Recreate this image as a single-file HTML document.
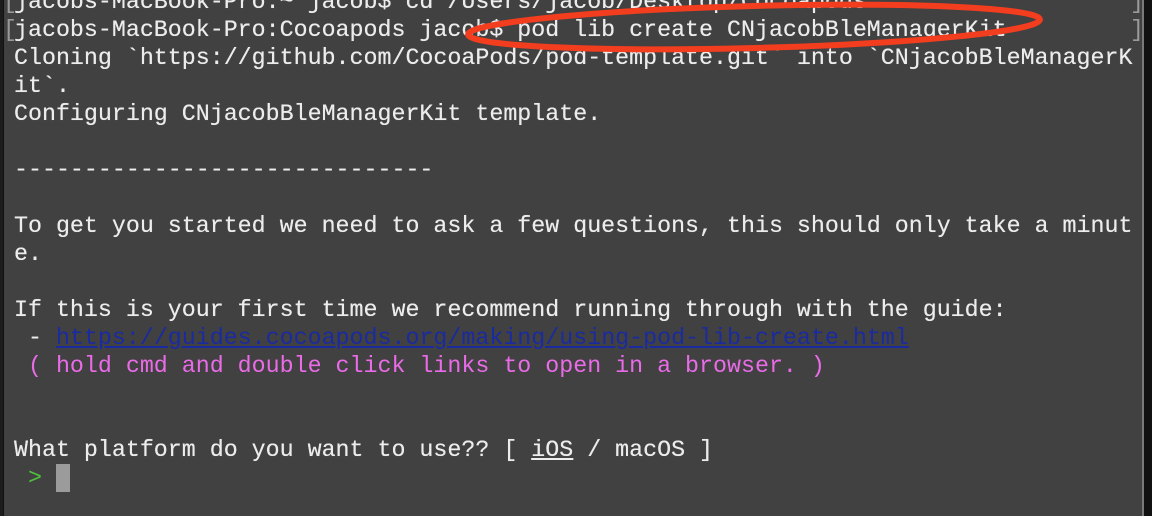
<!DOCTYPE html>
<html><head><style>
html,body{margin:0;padding:0;}
body{width:1152px;height:516px;overflow:hidden;background:#111;position:relative;}
#term{position:absolute;left:4px;top:0;width:1138px;height:516px;background:#414141;}
#lb{position:absolute;left:0;top:0;width:3px;height:516px;background:#1c1c1c;}
#rb{position:absolute;left:1142px;top:0;width:2px;height:516px;background:#7a7a7a;}
pre{position:absolute;left:14px;top:-12px;margin:0;font-family:"Liberation Mono",monospace;font-size:23.3px;line-height:28px;color:#ececec;text-shadow:0 0 0.4px #ececec;}
.br{position:absolute;font-family:"Liberation Mono",monospace;font-size:23.3px;line-height:28px;color:#9a9a9a;}
.lnk{color:#1a2aa0;text-decoration:underline;text-shadow:none;}
.mag{color:#ea6be8;text-shadow:none;}
.grn{color:#4cc43a;text-shadow:none;}
.cur{display:inline-block;width:14px;height:28px;background:#9b9b9b;vertical-align:top;}
svg{position:absolute;left:0;top:0;}
</style></head><body>
<div id="term"></div><div id="lb"></div><div id="rb"></div>
<div class="br" style="left:3px;top:-12px">[</div>
<div class="br" style="left:3px;top:16px">[</div>
<div class="br" style="left:1130px;top:-12px">]</div>
<div class="br" style="left:1130px;top:16px">]</div>
<pre>jacobs-MacBook-Pro:~ jacob$ cd /Users/jacob/Desktop/Cocoapods
jacobs-MacBook-Pro:Cocoapods jacob$ pod lib create CNjacobBleManagerKit
Cloning `https://github.com/CocoaPods/pod-template.git` into `CNjacobBleManagerK
it`.
Configuring CNjacobBleManagerKit template.

------------------------------

To get you started we need to ask a few questions, this should only take a minut
e.

If this is your first time we recommend running through with the guide:
 - <span class="lnk">https://guides.cocoapods.org/making/using-pod-lib-create.html</span>
<span class="mag"> ( hold cmd and double click links to open in a browser. )</span>


What platform do you want to use?? [ <u>iOS</u> / macOS ]
 <span class="grn">&gt;</span> <span class="cur"></span></pre>
<svg width="1152" height="516"><ellipse cx="754" cy="27" rx="286" ry="21" fill="none" stroke="#f23d1e" stroke-width="6" transform="rotate(-1.5 754 27)"/></svg>
</body></html>
